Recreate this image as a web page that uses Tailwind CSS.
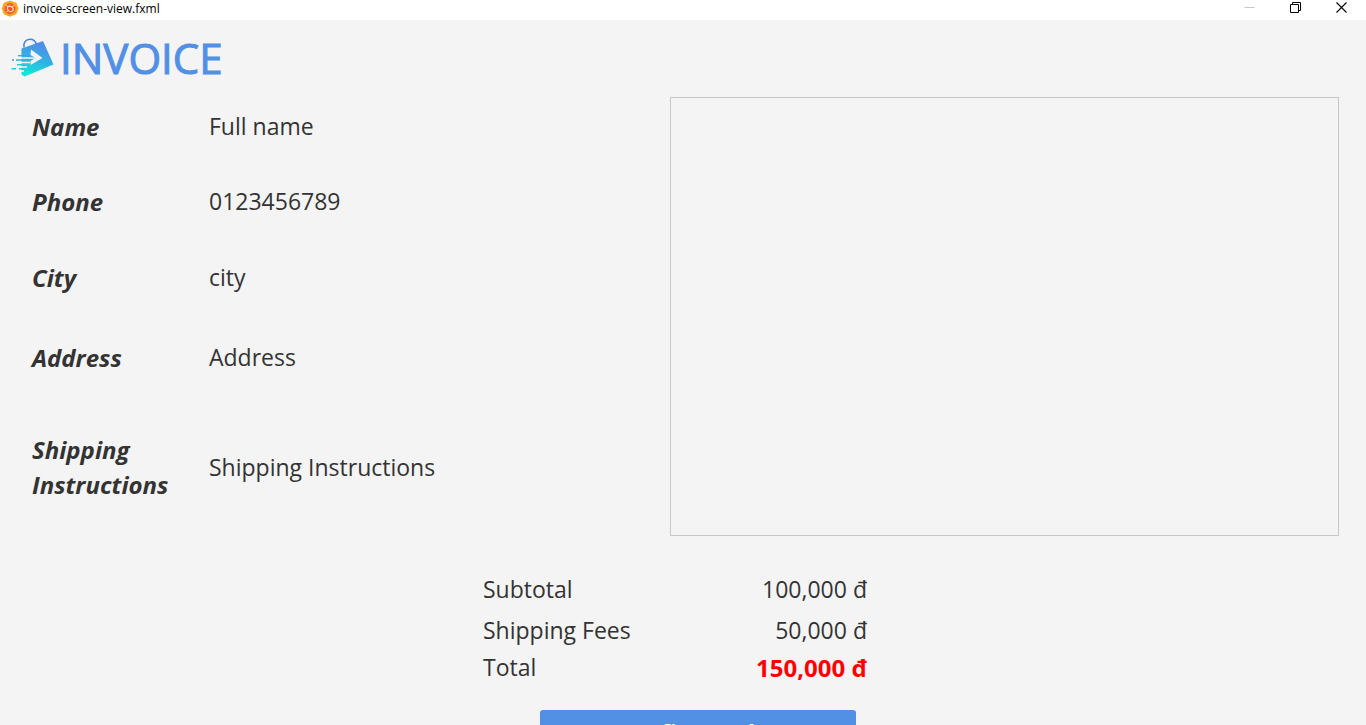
<!DOCTYPE html>
<html lang="en">
<head>
<meta charset="utf-8">
<meta name="viewport" content="width=device-width, initial-scale=1">
<title>invoice-screen-view.fxml</title>
<script src="https://cdn.jsdelivr.net/npm/@tailwindcss/browser@4"></script>
</head>
<body class="h-screen overflow-hidden bg-[#f4f4f4] font-['Open_Sans','Noto_Sans',sans-serif] text-[23px] leading-[35px] text-[#333333]">
<header class="flex h-5 items-start bg-white text-black">
  <div class="flex h-[17px] items-center gap-1 pl-px">
    <svg class="size-[18px]" viewBox="0 0 18 18" aria-hidden="true">
      <path d="M9 0.6 L15.5 3 L17.5 8.5 L15.300 14.3 L9 16.8 L2.700 14.3 L0.8 8.5 L2.500 3Z" fill="#f9a824"/>
      <circle cx="9" cy="8.6" r="5.600" fill="#f0602a"/>
      <ellipse cx="9.300" cy="8.900" rx="3.100" ry="2.400" transform="rotate(35 9.300 8.900)" fill="#ee4f22" stroke="#ffdcc0" stroke-width="1.100"/>
      <path d="M4.6 5.4 C6 5 6.500 6 7 7 M13.4 5.2 L11.200 6.800 M5.600 12 L7.200 10.800" fill="none" stroke="#ffdcc0" stroke-width="1"/>
    </svg>
    <span class="text-[12px] leading-[17px]">invoice-screen-view.fxml</span>
  </div>
  <div class="ml-auto flex pr-0.5">
    <button type="button" aria-label="Minimize" class="flex h-[15px] w-[46px] items-center justify-center"><svg class="size-[11px]" viewBox="0 0 11 11" stroke="#c8c8c8"><path d="M0.5 5.5h10"/></svg></button>
    <button type="button" aria-label="Restore" class="flex h-[15px] w-[46px] items-center justify-center"><svg class="size-[11px]" viewBox="0 0 11 11" fill="none" stroke="#000"><path d="M0.5 2.5h8v8h-8z M2.5 2.5v-2h8v8h-2"/></svg></button>
    <button type="button" aria-label="Close" class="flex h-[15px] w-[46px] items-center justify-center"><svg class="size-[11px]" viewBox="0 0 11 11" fill="none" stroke="#000" stroke-width="1.1"><path d="M0.5 0.5l10 10M10.5 0.5l-10 10"/></svg></button>
  </div>
</header>

<main>
  <div class="mb-0.5 flex h-[75px] items-center gap-1 pl-[10px]">
    <svg class="h-10 w-[46px]" viewBox="0 0 46 40" fill="none" aria-hidden="true">
      <defs><linearGradient id="bag" x1="0.6" y1="0" x2="0.35" y2="1"><stop offset="0.1" stop-color="#4f8fe6"/><stop offset="0.55" stop-color="#2fb4e2"/><stop offset="0.95" stop-color="#12e6d8"/></linearGradient></defs>
      <path d="M11.5 10.5 L33 3 L43.5 26.5 L14.5 38.5 L11.5 36.5Z" fill="url(#bag)"/>
      <path d="M14 9.500C13 4.500 16 1.300 20 1.300C23.500 1.300 25.500 3 26.500 6.500" stroke="#4584e2" stroke-width="1.500"/>
      <path d="M21 11.500 L32.500 20 L20.500 27 L20.500 23 L25.500 20 L20.500 17Z" fill="#f4f4f4"/>
      <path d="M9 20H25M9 24.500H20M10 29H17M10 33H14" stroke="#f4f4f4" stroke-width="1.400"/>
      <path d="M8 17.700H20" stroke="#3f9ee3" stroke-width="1.300"/>
      <path d="M6 22H20" stroke="#35b2e2" stroke-width="1.500"/>
      <path d="M2 22H4" stroke="#3b9be5" stroke-width="1.400"/>
      <path d="M7 26.700H17" stroke="#28c8df" stroke-width="1.500"/>
      <path d="M1.500 30.700H6M9 30.700H16" stroke="#2bc3df" stroke-width="1.600"/>
    </svg>
    <h1 class="text-[42px] leading-[56px] text-[#5190e5] [-webkit-text-stroke:1px_#5190e5]">INVOICE</h1>
  </div>

  <div class="flex pr-[27px]">
    <dl class="flex w-1/2 shrink-0 flex-col pl-8">
      <div class="grid h-[58px] grid-cols-[177px_1fr] items-center"><dt class="text-[24px] font-bold italic">Name</dt><dd>Full name</dd></div>
      <div class="grid h-[92px] grid-cols-[177px_1fr] items-center"><dt class="text-[24px] font-bold italic">Phone</dt><dd>0123456789</dd></div>
      <div class="grid h-[60px] grid-cols-[177px_1fr] items-center"><dt class="text-[24px] font-bold italic">City</dt><dd>city</dd></div>
      <div class="grid h-[100px] grid-cols-[177px_1fr] items-center"><dt class="text-[24px] font-bold italic">Address</dt><dd>Address</dd></div>
      <div class="grid h-[120px] grid-cols-[177px_1fr] items-center"><dt class="text-[24px] font-bold italic">Shipping<br>Instructions</dt><dd>Shipping Instructions</dd></div>
    </dl>
    <section aria-label="Items" class="h-[439px] flex-1 border border-[#c8c8c8]"></section>
  </div>

  <div class="flex justify-center pt-[34px] pr-4">
    <dl class="w-96">
      <div class="flex h-[39px] items-center justify-between"><dt>Subtotal</dt><dd>100,000 đ</dd></div>
      <div class="flex h-[43px] items-center justify-between"><dt>Shipping Fees</dt><dd>50,000 đ</dd></div>
      <div class="flex h-[30px] items-center justify-between"><dt>Total</dt><dd class="text-[24px] font-bold text-[#ff0000]">150,000 đ</dd></div>
    </dl>
  </div>

  <div class="flex justify-center pt-[28px] pl-[30px]">
    <button type="button" class="h-[46px] w-[316px] rounded-[3px] bg-[#5190e5] font-bold text-white">Confirm order</button>
  </div>
</main>
</body>
</html>
